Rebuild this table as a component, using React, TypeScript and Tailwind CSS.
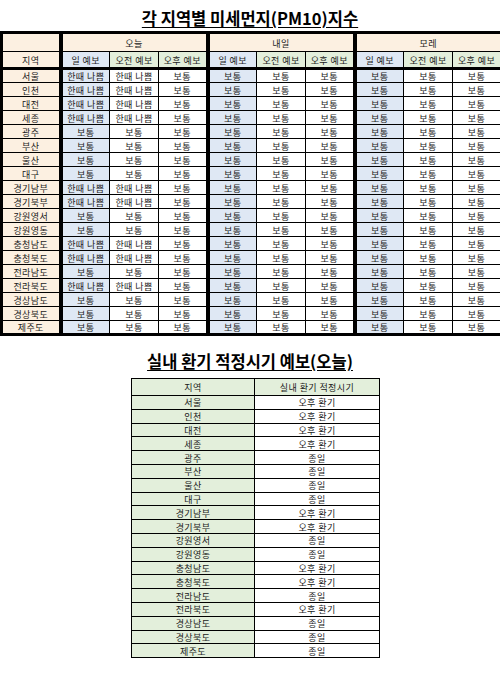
const regions = [
  "서울", "인천", "대전", "세종", "광주", "부산", "울산", "대구", "경기남부", "경기북부",
  "강원영서", "강원영동", "충청남도", "충청북도", "전라남도", "전라북도", "경상남도", "경상북도", "제주도",
];

// regions with "한때 나쁨" in today's day / morning forecast
const badToday = ["서울", "인천", "대전", "세종", "경기남부", "경기북부", "충청남도", "충청북도", "전라북도"];

const afternoonVent = ["서울", "인천", "대전", "세종", "경기남부", "경기북부", "충청남도", "충청북도", "전라북도"];

const days = ["오늘", "내일", "모레"];
const subs = ["일 예보", "오전 예보", "오후 예보"];

const cell = "border border-black text-center align-middle p-0 pt-px whitespace-nowrap";

const App = () => {
  return (
    <div
      className="w-[500px] min-h-[677px] bg-white text-[#1a1a1a]"
      style={{ fontFamily: '"Noto Sans CJK KR", "Noto Sans", sans-serif' }}
    >
      <div className="pt-[8px] mb-[3px] text-center text-[16.5px] leading-[20px] font-bold text-black underline underline-offset-2">
        각 지역별 미세먼지(PM10)지수
      </div>

      <table className="w-[500px] table-fixed border-collapse border-[3px] border-black text-[9px] leading-[11px] tracking-[0.4px]">
        <colgroup>
          <col className="w-[59px]" />
          {Array.from({ length: 9 }).map((_, i) => (
            <col key={i} className="w-[49px]" />
          ))}
        </colgroup>
        <thead>
          <tr className="h-[19px]">
            <td className={`${cell} bg-[#fcf0e1]`} />
            {days.map((d) => (
              <td key={d} colSpan={3} className={`${cell} border-l-[4px] bg-[#fcf0e1]`}>
                {d}
              </td>
            ))}
          </tr>
          <tr className="h-[17px]">
            <td className={`${cell} border-b-[3px] bg-[#fcf0e1]`}>지역</td>
            {days.map((d) =>
              subs.map((s, j) => (
                <td
                  key={d + s}
                  className={`${cell} border-b-[3px] ${j === 0 ? "border-l-[4px] bg-[#dfe8f4]" : "bg-[#e3efdb]"}`}
                >
                  {s}
                </td>
              ))
            )}
          </tr>
        </thead>
        <tbody>
          {regions.map((r) => {
            const bad = badToday.includes(r);
            return (
              <tr key={r} className="h-[14px]">
                <td className={`${cell} bg-[#fcf0e1]`}>{r}</td>
                {days.map((d, di) =>
                  subs.map((s, j) => {
                    const text = di === 0 && j < 2 && bad ? "한때 나쁨" : "보통";
                    return (
                      <td
                        key={d + s}
                        className={`${cell} ${j === 0 ? "border-l-[4px] bg-[#dfe8f4]" : "bg-white"}`}
                      >
                        {text}
                      </td>
                    );
                  })
                )}
              </tr>
            );
          })}
        </tbody>
      </table>

      <div className="pt-[15px] mb-[7px] text-center text-[16.5px] leading-[20px] font-bold text-black underline underline-offset-2">
        실내 환기 적정시기 예보(오늘)
      </div>

      <table className="ml-[131px] w-[248px] table-fixed border-collapse border border-black text-[9px] leading-[11px] tracking-[0.4px]">
        <colgroup>
          <col className="w-[123px]" />
          <col className="w-[125px]" />
        </colgroup>
        <thead>
          <tr className="h-[17px]">
            <td className={`${cell} bg-[#e3efdb]`}>지역</td>
            <td className={`${cell} bg-[#e3efdb]`}>실내 환기 적정시기</td>
          </tr>
        </thead>
        <tbody>
          {regions.map((r) => (
            <tr key={r} className="h-[13.8px]">
              <td className={`${cell} bg-[#e3efdb]`}>{r}</td>
              <td className={`${cell} bg-white`}>{afternoonVent.includes(r) ? "오후 환기" : "종일"}</td>
            </tr>
          ))}
        </tbody>
      </table>
    </div>
  );
};

export default App;
